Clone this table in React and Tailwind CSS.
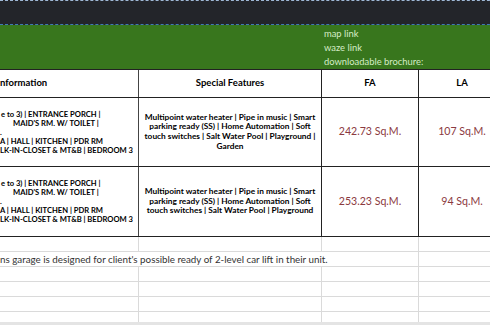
const font = { fontFamily: '"Lato", "Liberation Sans", sans-serif' };

function Col1Lines({ lines }) {
  return (
    <div className="flex flex-col justify-center h-full text-[7.6px] font-bold leading-[9px] text-black whitespace-nowrap">
      {lines.map((l, i) => (
        <div key={i} className={l.indent}>{l.text || '\u00a0'}</div>
      ))}
    </div>
  );
}

const unitLines = [
  { text: 'e to 3) | ENTRANCE PORCH |', indent: 'pl-[1px]' },
  { text: "MAID'S RM. W/ TOILET |", indent: 'pl-[13px]' },
  { text: '.', indent: 'pl-0' },
  { text: 'A | HALL | KITCHEN | PDR RM', indent: 'pl-0' },
  { text: 'LK-IN-CLOSET & MT&B | BEDROOM 3', indent: 'pl-0' },
];

const rows = [
  {
    features: [
      'Multipoint water heater | Pipe in music | Smart',
      'parking ready (SS) | Home Automation | Soft',
      'touch switches | Salt Water Pool | Playground |',
      'Garden',
    ],
    fa: '242.73 Sq.M.',
    la: '107 Sq.M.',
    h: 'h-[69px]',
  },
  {
    features: [
      'Multipoint water heater | Pipe in music | Smart',
      'parking ready (SS) | Home Automation | Soft',
      'touch switches | Salt Water Pool | Playground',
    ],
    fa: '253.23 Sq.M.',
    la: '94 Sq.M.',
    h: 'h-[70px]',
  },
];

function GridRow({ h = 'h-[15px]', border = true }) {
  return (
    <div className={`flex ${h} ${border ? 'border-b border-[#dadada]' : ''}`}>
      <div className="w-[139px] shrink-0 border-r border-[#dadada]" />
      <div className="w-[183px] shrink-0 border-r border-[#dadada]" />
      <div className="w-[97px] shrink-0 border-r border-[#dadada]" />
      <div className="w-[86px] shrink-0" />
    </div>
  );
}

export default function App() {
  return (
    <div className="w-[490px] h-[325px] overflow-hidden bg-white" style={font}>
      <div className="w-[510px]">
        {/* dark toolbar strip */}
        <div className="h-[25px] bg-[#23252a] border-t border-b border-dashed border-t-[#9fb8d6] border-b-[#3f79b5]" />

        {/* green band with links */}
        <div className="h-[44px] bg-[#38761d] flex">
          <div className="w-[324px] shrink-0" />
          <div className="flex flex-col pt-[2px] text-[9.4px] leading-[14px] text-[#d4ecc6]">
            <span>map link</span>
            <span>waze link</span>
            <span>downloadable brochure:</span>
          </div>
        </div>

        {/* header row */}
        <div className="flex h-[29px] border-t border-b border-[#222] text-[9.5px] font-bold">
          <div className="w-[139px] shrink-0 border-r border-[#444] flex items-center">
            nformation
          </div>
          <div className="w-[183px] shrink-0 border-r border-[#222] flex items-center justify-center">
            Special Features
          </div>
          <div className="w-[97px] shrink-0 border-r border-[#222] flex items-center justify-center">
            FA
          </div>
          <div className="w-[86px] shrink-0 flex items-center justify-center">
            LA
          </div>
        </div>

        {rows.map((r, i) => (
          <div key={i} className={`flex ${r.h} border-b border-[#222]`}>
            <div className="w-[139px] shrink-0 border-r border-[#444]">
              <Col1Lines lines={unitLines} />
            </div>
            <div className="w-[183px] shrink-0 border-r border-[#222] flex flex-col items-center justify-center text-center text-[8.3px] font-bold leading-[9.7px] whitespace-nowrap">
              {r.features.map((f) => (
                <span key={f}>{f}</span>
              ))}
            </div>
            <div className="w-[97px] shrink-0 border-r border-[#222] flex items-center justify-center text-[10.6px] text-[#8b3a40]">
              {r.fa}
            </div>
            <div className="w-[86px] shrink-0 flex items-center justify-center text-[10.6px] text-[#8b3a40]">
              {r.la}
            </div>
          </div>
        ))}

        {/* empty sheet rows */}
        <GridRow />
        <div className="flex h-[15px] border-b border-[#dadada]">
          <div className="w-[419px] shrink-0 border-r border-[#dadada] flex items-center text-[9.8px] text-[#333] whitespace-nowrap">
            ns garage is designed for client&apos;s possible ready of 2-level car lift in their unit.
          </div>
          <div className="w-[86px] shrink-0" />
        </div>
        <GridRow />
        <GridRow />
        <GridRow />
        <GridRow h="h-[10px]" border={false} />
        <div className="h-[3px] bg-[#e4e4e4]" />
      </div>
    </div>
  );
}
